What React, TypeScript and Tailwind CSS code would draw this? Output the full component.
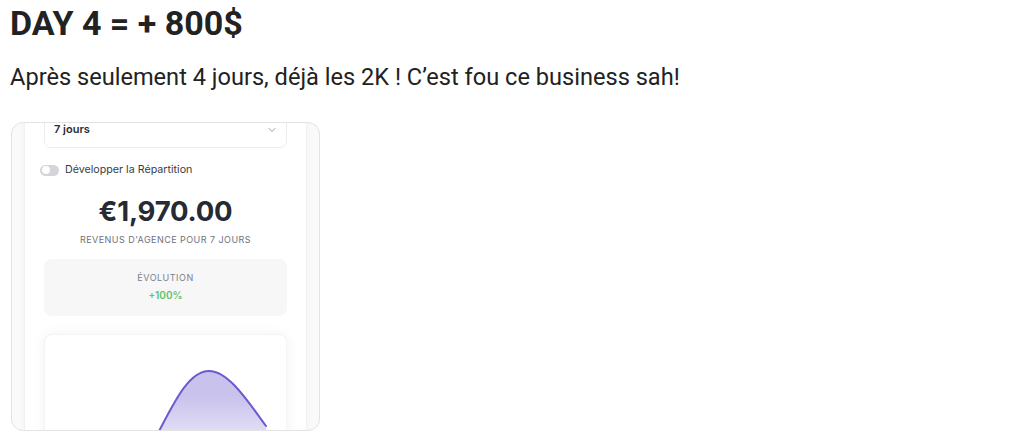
import { ChevronDown } from "lucide-react";

const Chart = () => (
  <svg viewBox="0 0 245 120" className="block h-[120px] w-[245px]">
    <defs>
      <linearGradient id="fillGrad" x1="0" y1="0" x2="0" y2="1">
        <stop offset="30%" stopColor="#c9c2ec" />
        <stop offset="85%" stopColor="#e9e6f8" />
      </linearGradient>
    </defs>
    <path
      d="M112 100 C128 70 143 36 164 36 C184 36 204 68 221 91 L221 120 L100 120 Z"
      fill="url(#fillGrad)"
    />
    <path
      d="M106 110 L112 100 C128 70 143 36 164 36 C184 36 204 68 221 91"
      fill="none"
      stroke="#6a5bcf"
      strokeWidth="2"
      strokeLinecap="round"
    />
  </svg>
);

const RevenueCard = () => {
  return (
    <div className="mt-[30px] h-[309px] w-[309px] overflow-hidden rounded-[12px] border border-[#e3e3e3] bg-[#fafafa] font-['Inter',sans-serif]">
      <div className="mx-[12px] h-[400px] border-x border-[#f1f1f1] bg-white shadow-[0_0_6px_rgba(0,0,0,0.03)]">
        <div className="px-[19px]">
          {/* period select, cut off at top */}
          <div className="-mt-[12px] flex h-[37px] items-end justify-between rounded-b-[7px] border border-[#ececec] pb-[10px] pl-[9px] pr-[8px]">
            <span className="text-[11px] font-semibold text-[#2d2d33]">7 jours</span>
            <ChevronDown className="mb-[1px] h-[12px] w-[12px] text-[#9a9aa2]" strokeWidth={2} />
          </div>

          <div className="-ml-[4px] mt-[14px] flex items-center gap-[6px]">
            <div className="flex h-[11px] w-[19px] items-center rounded-full bg-[#d4d5da] px-[1.5px]">
              <div className="h-[8px] w-[8px] rounded-full bg-white" />
            </div>
            <span className="text-[10.7px] text-[#3a3d45]">Développer la Répartition</span>
          </div>

          <div className="mt-[15px] text-center text-[27.5px] font-bold leading-[36px] tracking-[-0.2px] text-[#262a33]">
            €1,970.00
          </div>
          <div className="mt-[4px] text-center text-[9px] uppercase tracking-[0.45px] text-[#6e717b]">
            REVENUS D'AGENCE POUR 7 JOURS
          </div>

          <div className="mt-[12px] flex h-[57px] flex-col items-center justify-center rounded-[8px] bg-[#f7f7f8]">
            <span className="text-[9px] uppercase tracking-[0.5px] text-[#7d808a]">ÉVOLUTION</span>
            <span className="mt-[4px] text-[10px] font-semibold text-[#5ec36c]">+100%</span>
          </div>

          <div className="mt-[18px] overflow-hidden rounded-t-[8px] border border-b-0 border-[#f4f4f4] bg-white shadow-[0_0_14px_rgba(0,0,0,0.05)]">
            <Chart />
          </div>
        </div>
      </div>
    </div>
  );
};

export default function App() {
  return (
    <div className="min-h-[441px] w-[1024px] bg-white px-[10px] font-['Roboto',sans-serif]">
      <h1 className="pt-[3px] text-[34px] font-bold leading-[40px] text-[#222222]">DAY 4 = + 800$</h1>
      <p className="mt-[19px] text-[23.6px] leading-[30px] text-[#222222]">
        Après seulement 4 jours, déjà les 2K ! C’est fou ce business sah!
      </p>
      <div className="pl-[1px]">
        <RevenueCard />
      </div>
    </div>
  );
}
